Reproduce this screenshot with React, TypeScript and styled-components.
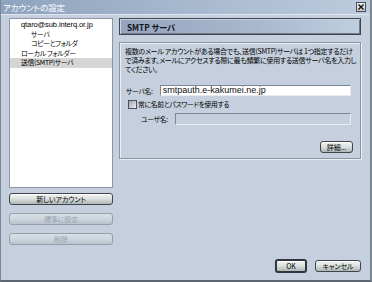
import React from 'react'
import styled, { createGlobalStyle, css } from 'styled-components'

const GlobalStyle = createGlobalStyle`
  html, body {
    margin: 0;
    padding: 0;
    background: #c5cfdd;
  }
  body {
    font-family: "Noto Sans CJK JP", "Liberation Sans", sans-serif;
    font-feature-settings: "palt";
    color: #000;
  }
`

const SWindow = styled.div`
  width: 372px;
  height: 282px;
  box-sizing: border-box;
  display: flex;
  flex-direction: column;
  background: #c5cfdd;
  border-left: 1px solid #7c8794;
  border-right: 2px solid #7c8794;
  border-bottom: 2px solid #5d6570;
`

const STitleBar = styled.div`
  height: 14px;
  flex: none;
  display: flex;
  align-items: center;
  justify-content: space-between;
  padding: 0 4px 0 2px;
  background: linear-gradient(90deg, #8fa3be 0%, #a9bad0 55%, #bccbdd 100%);
  border-bottom: 1px solid #dfe6ef;
`

const STitle = styled.span`
  font-size: 8.5px;
  letter-spacing: -0.1px;
  line-height: 14px;
  color: #fff;
`

const SClose = styled.div`
  width: 8px;
  height: 8px;
  border: 1px solid #4a4f57;
  background: linear-gradient(#f2f2f2, #c8c8c8);
  display: flex;
  align-items: center;
  justify-content: center;
`

const SBody = styled.div`
  flex: 1;
  display: flex;
  gap: 6px;
  padding: 3px 9px 7px 8px;
  min-width: 0;
`

const SLeft = styled.div`
  width: 104px;
  flex: none;
  display: flex;
  flex-direction: column;
  gap: 8px;
`

const STree = styled.div`
  height: 170px;
  box-sizing: border-box;
  background: #fff;
  border: 1px solid #8d96a3;
  padding-top: 1px;
  margin-bottom: -3px;
`

const SItem = styled.div<{ $indent: number; $selected?: boolean; $latin?: boolean }>`
  height: 9.5px;
  line-height: 9.5px;
  font-size: 6.8px;
  letter-spacing: -0.3px;
  padding-left: ${(p) => 11 + p.$indent * 10}px;
  white-space: nowrap;
  background: ${(p) => (p.$selected ? '#d5d5d5' : 'transparent')};
  ${(p) =>
    p.$latin &&
    css`
      font-family: "Liberation Sans", sans-serif;
      font-size: 7.5px;
      letter-spacing: -0.1px;
    `}
`

const SButton = styled.div<{ $disabled?: boolean; $default?: boolean; $width?: number }>`
  box-sizing: border-box;
  height: 12px;
  width: ${(p) => (p.$width ? `${p.$width}px` : '100%')};
  border-radius: 3px;
  display: flex;
  align-items: center;
  justify-content: center;
  font-size: 7px;
  letter-spacing: -0.1px;
  border: 1px solid #3f454c;
  background: linear-gradient(#f1f3f1 0%, #dde2df 45%, #aeb6b6 100%);
  box-shadow: inset 0 1px 0 #fff;
  ${(p) =>
    p.$disabled &&
    css`
      border-color: #96a0ac;
      color: #9aa3ad;
      background: linear-gradient(#d9dfe6 0%, #cdd5de 50%, #b9c3cf 100%);
      box-shadow: none;
    `}
  ${(p) =>
    p.$default &&
    css`
      height: 14px;
      border: 2px solid #2f353c;
    `}
`

const SRight = styled.div`
  flex: 1;
  min-width: 0;
  display: flex;
  flex-direction: column;
`

const SHeader = styled.div`
  height: 17px;
  box-sizing: border-box;
  border: 1px solid #3d4550;
  background: linear-gradient(90deg, #95a4be 0%, #a7b5cc 50%, #bfcde0 100%);
  box-shadow: inset 1px 1px 0 #c9d3e2, inset -1px -1px 0 #6f7a8a;
  display: flex;
  align-items: center;
  padding-left: 7px;
  font-size: 8.2px;
  font-weight: 700;
  color: #101418;
`

const SGroup = styled.div`
  margin-top: 7px;
  height: 117px;
  box-sizing: border-box;
  border: 1px solid #8a95a4;
  box-shadow: inset 1px 1px 0 #e9eef5, 1px 1px 0 #e9eef5;
  padding: 4px 5px 0 5px;
  display: flex;
  flex-direction: column;
`

const SText = styled.p`
  margin: 0;
  font-size: 7px;
  letter-spacing: -0.3px;
  line-height: 9px;
  white-space: nowrap;
`

const SRow = styled.div<{ $indent?: number }>`
  display: flex;
  align-items: center;
  gap: 7px;
  padding-left: ${(p) => p.$indent || 0}px;
  font-size: 6.8px;
  letter-spacing: -0.3px;
`

const SLabel = styled.span`
  white-space: nowrap;
`

const SInput = styled.div<{ $disabled?: boolean }>`
  flex: 1;
  box-sizing: border-box;
  height: ${(p) => (p.$disabled ? 12 : 11)}px;
  margin-right: 4px;
  background: ${(p) => (p.$disabled ? '#c5cfdd' : '#fff')};
  border: 1px solid #7d8896;
  border-right-color: #e6ebf2;
  border-bottom-color: #e6ebf2;
  font-family: "Liberation Sans", sans-serif;
  font-size: 9px;
  letter-spacing: 0;
  line-height: 9px;
  padding-left: 2px;
  color: #111;
`

const SCheck = styled.span`
  width: 7px;
  height: 7px;
  border: 1px solid #4b525b;
  background: linear-gradient(135deg, #9aa3ae, #eef1f4);
  flex: none;
`

const SCheckRow = styled.div`
  display: flex;
  align-items: center;
  gap: 1px;
  padding-left: 3px;
  font-size: 6.8px;
  letter-spacing: -0.3px;
`

const SDetail = styled.div`
  display: flex;
  justify-content: flex-end;
  padding-right: 2px;
  margin-top: 16px;
`

const SFooter = styled.div`
  margin-top: auto;
  display: flex;
  justify-content: flex-end;
  align-items: center;
  gap: 8px;
`

const App: React.FC = () => {
  return (
    <>
      <GlobalStyle />
      <SWindow>
        <STitleBar>
          <STitle>アカウントの設定</STitle>
          <SClose>
            <svg width="6" height="6" viewBox="0 0 6 6">
              <path d="M0.5 0.5 L5.5 5.5 M5.5 0.5 L0.5 5.5" stroke="#111" strokeWidth="1.4" />
            </svg>
          </SClose>
        </STitleBar>
        <SBody>
          <SLeft>
            <STree>
              <SItem $indent={0} $latin>qtaro@sub.interq.or.jp</SItem>
              <SItem $indent={1}>サーバ</SItem>
              <SItem $indent={1}>コピーとフォルダ</SItem>
              <SItem $indent={0}>ローカル フォルダー</SItem>
              <SItem $indent={0} $selected>送信(SMTP)サーバ</SItem>
            </STree>
            <SButton>新しいアカウント</SButton>
            <SButton $disabled>標準に設定</SButton>
            <SButton $disabled>削除</SButton>
          </SLeft>
          <SRight>
            <SHeader>SMTP サーバ</SHeader>
            <SGroup>
              <SText>
                複数のメール アカウントがある場合でも、送信(SMTP)サーバは 1つ指定するだけ
                <br />
                で済みます。メールにアクセスする際に最も頻繁に使用する送信サーバ名を入力し
                <br />
                てください。
              </SText>
              <SRow style={{ marginTop: 11 }} $indent={1}>
                <SLabel>サーバ名:</SLabel>
                <SInput>smtpauth.e-kakumei.ne.jp</SInput>
              </SRow>
              <SCheckRow style={{ marginTop: 3 }}>
                <SCheck />
                <SLabel>常に名前とパスワードを使用する</SLabel>
              </SCheckRow>
              <SRow style={{ marginTop: 4 }} $indent={16}>
                <SLabel>ユーザ名:</SLabel>
                <SInput $disabled />
              </SRow>
              <SDetail>
                <SButton $width={33}>詳細...</SButton>
              </SDetail>
            </SGroup>
            <SFooter>
              <SButton $default $width={32}>OK</SButton>
              <SButton $width={46}>キャンセル</SButton>
            </SFooter>
          </SRight>
        </SBody>
      </SWindow>
    </>
  )
}

export default App
